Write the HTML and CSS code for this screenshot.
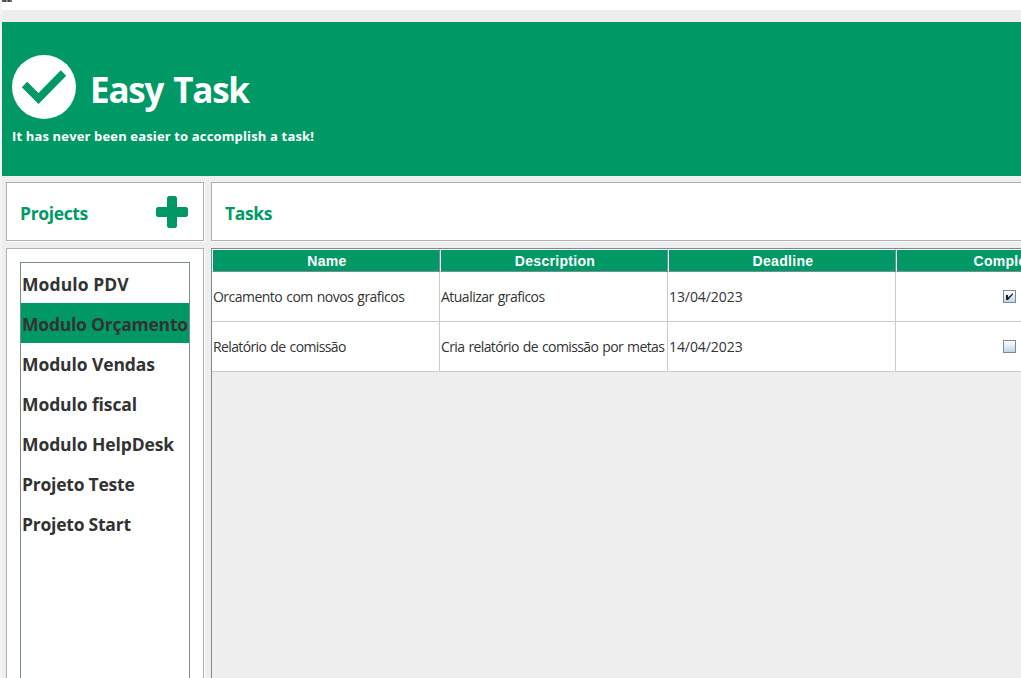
FILE: index.html
```html
<!DOCTYPE html>
<html lang="en">
<head>
<meta charset="utf-8">
<title>Easy Task</title>
<link rel="stylesheet" href="styles.css">
</head>
<body>
<div class="titlebar"><span class="app-icon"></span></div>
<div class="window">
  <header class="banner">
    <div class="brand">
      <svg class="logo" width="64" height="64" viewBox="0 0 64 64"><circle cx="32" cy="32" r="32" fill="#fff"/><path d="M12.500 29.500L26.500 43.500L51.500 18" fill="none" stroke="#009966" stroke-width="7.600"/></svg>
      <h1 class="title">Easy Task</h1>
    </div>
    <p class="tagline">It has never been easier to accomplish a task!</p>
  </header>
  <div class="content">
    <aside class="side">
      <div class="panel bar"><h2 class="heading">Projects</h2>
        <svg class="add" width="32" height="32" viewBox="0 0 32 32"><path d="M12.500 0h7L21 1.500V11h9.500L32 12.500v7L30.500 21H21v9.500L19.500 32h-7L11 30.500V21H1.500L0 19.500v-7L1.500 11H11V1.500z" fill="#009966"/></svg>
      </div>
      <div class="panel projects">
        <ul class="list">
          <li class="project near">Modulo PDV</li>
          <li class="project selected tight">Modulo Orçamento</li>
          <li class="project">Modulo Vendas</li>
          <li class="project">Modulo fiscal</li>
          <li class="project">Modulo HelpDesk</li>
          <li class="project tight">Projeto Teste</li>
          <li class="project tight">Projeto Start</li>
        </ul>
      </div>
    </aside>
    <main class="main">
      <div class="panel bar"><h2 class="heading">Tasks</h2></div>
      <div class="table">
        <div class="row head"><div class="th">Name</div><div class="th">Description</div><div class="th">Deadline</div><div class="th">Completed</div></div>
        <div class="row"><div class="td">Orcamento com novos graficos</div><div class="td">Atualizar graficos</div><div class="td date">13/04/2023</div><div class="td check"><svg class="box" width="13" height="13" viewBox="1 1 11 11"><path d="M3 5h2v2.500L10 3v1.500L5 10H3z" fill="#222"/></svg></div></div>
        <div class="row"><div class="td snug">Relatório de comissão</div><div class="td snug">Cria relatório de comissão por metas</div><div class="td date">14/04/2023</div><div class="td check"><svg class="box" width="13" height="13" viewBox="1 1 11 11"></svg></div></div>
      </div>
    </main>
  </div>
</div>
</body>
</html>
```
FILE: styles.css
```css
* { box-sizing: border-box; margin: 0; padding: 0; }
body { width: 1021px; height: 678px; overflow: hidden; background: #f3f3f8; font-family: "Open Sans", "Noto Sans", sans-serif; color: #333; }
.titlebar { height: 10px; margin-left: 2px; background: #fff; }
.app-icon { display: block; width: 10px; height: 2px; background: linear-gradient(90deg, #555 0 4px, #888 4px 6px, #444 6px 8px, #778 8px); }
.window { height: 668px; margin-left: 2px; padding-top: 12px; background: #eee; overflow: hidden; }
.banner { height: 154px; padding: 33px 10px 0; background: #009966; color: #fff; }
.brand { display: flex; gap: 14px; height: 64px; }
.title { font-size: 35px; line-height: 49px; padding-top: 10px; letter-spacing: -1.2px; word-spacing: 2px; white-space: nowrap; }
.tagline { font-size: 13px; line-height: 18px; margin-top: 8px; font-weight: 700; letter-spacing: 0.15px; white-space: nowrap; }
.content { display: flex; gap: 7px; height: 502px; padding: 6px 0 0 4px; }
.side { display: flex; flex-direction: column; gap: 7px; flex: 0 0 198px; min-width: 0; }
.main { display: flex; flex-direction: column; gap: 7px; flex: 0 0 914px; }
.panel { background: #fff; border: 1px solid #b0b0b0; box-shadow: 1px 1px #fff; }
.bar { display: flex; flex: 0 0 59px; justify-content: space-between; align-items: center; padding: 0 15px 0 13px; }
.heading { font-size: 17.5px; line-height: 24px; padding-top: 3px; letter-spacing: -0.35px; color: #009966; }
.projects { flex: 1; min-height: 0; padding: 13px 13px 0; border-bottom: 0; }
.list { list-style: none; height: 500px; border: 1px solid #7a8a99; }
.project { height: 40px; padding-left: 1px; font-size: 17.5px; line-height: 43px; font-weight: 700; letter-spacing: -0.1px; white-space: nowrap; }
.near { letter-spacing: 0.08px; }
.tight { letter-spacing: -0.23px; }
.selected { background: #009966; }
.table { flex: 1; border: 1px solid #7a8a99; border-bottom: 0; }
.row { display: grid; grid-template-columns: repeat(4, 228px); height: 50px; }
.head { height: 23px; }
.th { border: 1px solid #fff; border-right-color: #7a8a99; border-bottom-color: #7a8a99; background: #009966; color: #fff; text-align: center; font: 700 14px/22px "Liberation Sans", Arial, sans-serif; letter-spacing: 0.3px; padding-left: 2px; height: 23px; }
.td { border-right: 1px solid #ccc; border-bottom: 1px solid #ccc; background: #fff; padding: 1px 0 0 1px; font-size: 14px; line-height: 48px; letter-spacing: -0.52px; word-spacing: 0.9px; white-space: nowrap; }
.snug { letter-spacing: -0.62px; word-spacing: 1px; }
.date { letter-spacing: -0.07px; }
.check { display: flex; justify-content: center; align-items: center; padding: 0; }
.box { border: 1px solid #7a8a99; background: linear-gradient(#fff, #c0d4e8); }
```
